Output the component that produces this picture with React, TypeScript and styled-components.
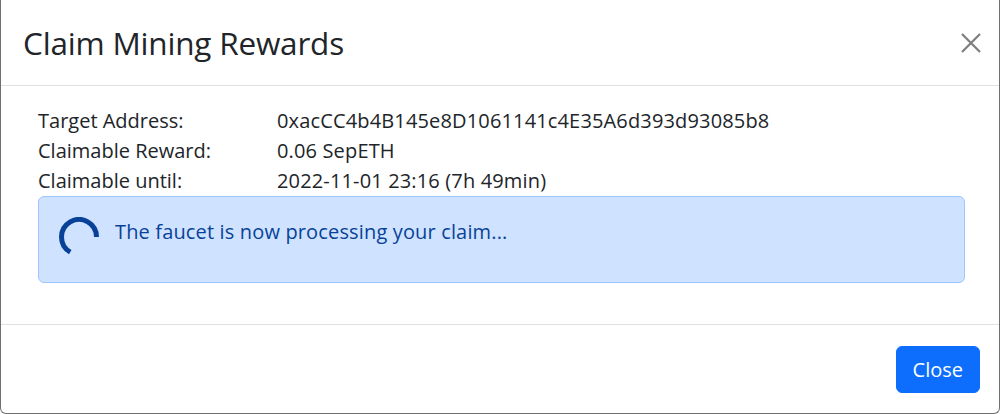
import React from "react";
import styled, { createGlobalStyle } from "styled-components";

const GlobalStyle = createGlobalStyle`
  html, body {
    margin: 0;
    padding: 0;
    background: #ffffff;
  }
  body {
    font-family: "Open Sans", "Noto Sans", "Liberation Sans", sans-serif;
    color: #212529;
  }
`;

const Modal = styled.div`
  box-sizing: border-box;
  width: 1000px;
  height: 414px;
  display: flex;
  flex-direction: column;
  background: #fff;
  border: 1px solid #6f6f6f;
  border-top: none;
  border-radius: 0 0 6px 6px;
`;

const Header = styled.div`
  height: 85px;
  display: flex;
  align-items: center;
  justify-content: space-between;
  padding: 0 18px 0 22px;
  border-bottom: 1px solid #dee2e6;
`;

const Title = styled.h3`
  margin: 0;
  font-size: 31.5px;
  font-weight: 400;
  line-height: 1.2;
  color: #212529;
  letter-spacing: -0.2px;
`;

const CloseX = styled.button`
  width: 20px;
  height: 20px;
  padding: 0;
  border: none;
  background: transparent;
  color: #000;
  opacity: 0.5;
  display: flex;
  cursor: pointer;
`;

const Body = styled.div`
  flex: 1;
  padding: 20px 34px 20px 37px;
`;

const InfoGrid = styled.div`
  display: grid;
  grid-template-columns: 239px 1fr;
  font-size: 20px;
  line-height: 30px;
`;

const Label = styled.div``;

const Value = styled.div`
  letter-spacing: 0.15px;
`;

const Alert = styled.div`
  display: flex;
  align-items: flex-start;
  gap: 16px;
  padding: 20px 20px 25px 20px;
  background: #cfe2ff;
  border: 1px solid #9ec5fe;
  border-radius: 6px;
  color: #084298;
  font-size: 20px;
  line-height: 30px;
  letter-spacing: 0.15px;
`;

const Spinner = styled.svg`
  flex: none;
  width: 40px;
  height: 40px;
`;

const Footer = styled.div`
  height: 88px;
  display: flex;
  align-items: center;
  justify-content: flex-end;
  padding: 0 19px;
  border-top: 1px solid #dee2e6;
`;

const PrimaryButton = styled.button`
  height: 47px;
  padding: 0 16px;
  border: 1px solid #0d6efd;
  border-radius: 6px;
  background: #0d6efd;
  color: #fff;
  font-family: inherit;
  font-size: 20px;
  cursor: pointer;
`;

const rows = [
  ["Target Address:", "0xacCC4b4B145e8D1061141c4E35A6d393d93085b8"],
  ["Claimable Reward:", "0.06 SepETH"],
  ["Claimable until:", "2022-11-01 23:16 (7h 49min)"],
];

export default function App() {
  return (
    <>
      <GlobalStyle />
      <Modal>
        <Header>
          <Title>Claim Mining Rewards</Title>
          <CloseX aria-label="Close">
            <svg width="20" height="20" viewBox="0 0 20 20">
              <path d="M1 1L19 19M19 1L1 19" stroke="currentColor" strokeWidth="2.2" />
            </svg>
          </CloseX>
        </Header>
        <Body>
          <InfoGrid>
            {rows.map(([label, value]) => (
              <React.Fragment key={label}>
                <Label>{label}</Label>
                <Value>{value}</Value>
              </React.Fragment>
            ))}
          </InfoGrid>
          <Alert>
            <Spinner viewBox="0 0 40 40">
              <path
                d="M37.5 20 A17.5 17.5 0 1 0 11.25 35.16"
                fill="none"
                stroke="currentColor"
                strokeWidth="5"
              />
            </Spinner>
            <span>The faucet is now processing your claim...</span>
          </Alert>
        </Body>
        <Footer>
          <PrimaryButton>Close</PrimaryButton>
        </Footer>
      </Modal>
    </>
  );
}
